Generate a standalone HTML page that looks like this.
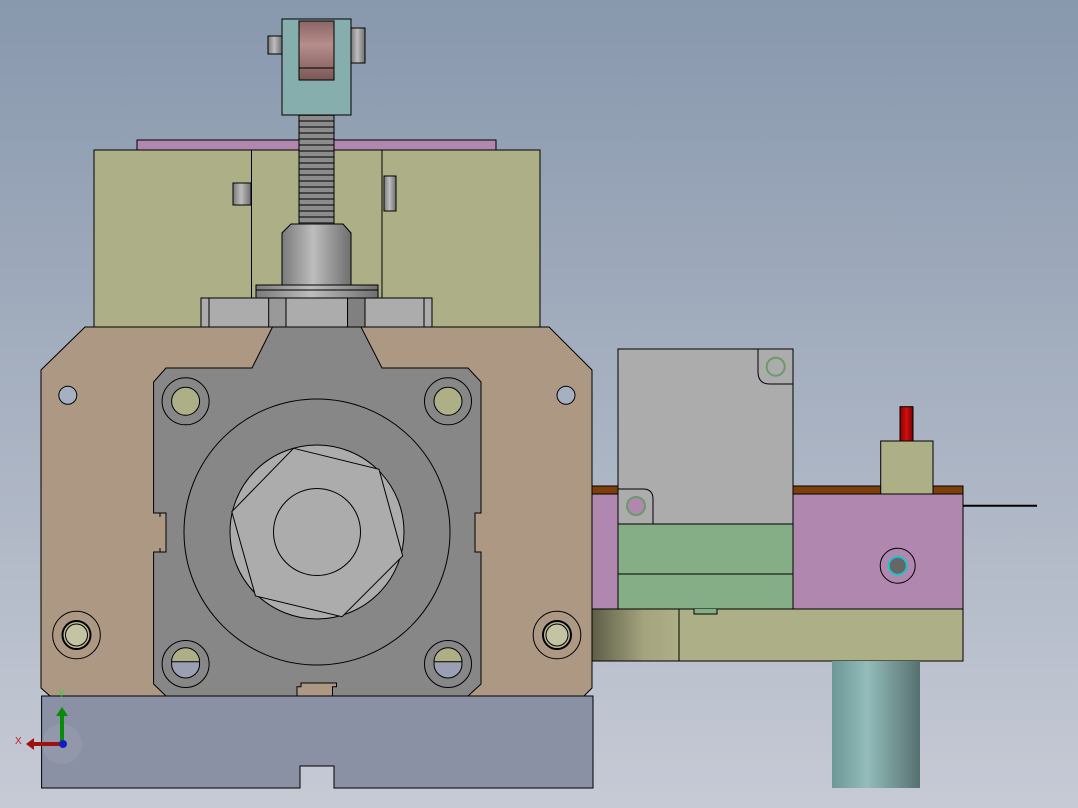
<!DOCTYPE html>
<html><head><meta charset="utf-8"><style>
html,body{margin:0;padding:0;width:1078px;height:808px;overflow:hidden}
svg{display:block}
</style></head><body>
<svg width="1078" height="808" viewBox="0 0 1078 808" xmlns="http://www.w3.org/2000/svg" font-family="Liberation Sans, sans-serif">
<defs>
<linearGradient id="bg" x1="0" y1="0" x2="0" y2="1"><stop offset="0" stop-color="#8898ad"/><stop offset="1" stop-color="#c6cad5"/></linearGradient>
<linearGradient id="cyl" x1="0" y1="0" x2="1" y2="0"><stop offset="0" stop-color="#6d9796"/><stop offset="0.4" stop-color="#93bcbb"/><stop offset="1" stop-color="#56716f"/></linearGradient>
<linearGradient id="metal" x1="0" y1="0" x2="1" y2="0"><stop offset="0" stop-color="#7a7a7a"/><stop offset="0.45" stop-color="#bdbdbd"/><stop offset="1" stop-color="#6f6f6f"/></linearGradient>
<linearGradient id="roll" x1="0" y1="0" x2="0" y2="1"><stop offset="0" stop-color="#8a6664"/><stop offset="0.4" stop-color="#b68e8c"/><stop offset="1" stop-color="#7a5856"/></linearGradient>
<linearGradient id="ol" x1="0" y1="0" x2="1" y2="0"><stop offset="0" stop-color="#5e5e48"/><stop offset="0.6" stop-color="#a4a47e"/><stop offset="1" stop-color="#adaf87"/></linearGradient>
<linearGradient id="red" x1="0" y1="0" x2="1" y2="0"><stop offset="0" stop-color="#8a0000"/><stop offset="0.5" stop-color="#d01010"/><stop offset="1" stop-color="#7a0000"/></linearGradient>
<pattern id="thr" width="10" height="6" patternUnits="userSpaceOnUse"><rect width="10" height="6" fill="#8c8c8c"/><rect y="0" width="10" height="2" fill="#444"/></pattern>
</defs>
<rect width="1078" height="808" fill="url(#bg)"/>
<g stroke="#000" stroke-width="1">
<!-- top clevis -->
<rect x="268" y="36" width="14" height="18" fill="url(#metal)"/>
<rect x="351" y="28" width="14" height="35" fill="url(#metal)"/>
<rect x="282" y="19" width="69" height="96" fill="#86aeac"/>
<rect x="299" y="21" width="35" height="59" fill="url(#roll)"/>
<line x1="299" y1="68" x2="334" y2="68"/>
<!-- pink plate -->
<rect x="137" y="140" width="359" height="10" fill="#b087ae"/>
<!-- olive block -->
<rect x="94" y="150" width="446" height="177" fill="#adaf87"/>
<line x1="251.5" y1="150" x2="251.5" y2="327"/>
<line x1="382" y1="150" x2="382" y2="327"/>
<rect x="233" y="183" width="18" height="22" fill="url(#metal)"/>
<rect x="384" y="176" width="12" height="35" fill="url(#metal)"/>
<!-- thread -->
<rect x="299" y="115" width="35" height="109" fill="url(#thr)"/>
<!-- nut -->
<path d="M291 224 H343 L351 233 V285 H282 V233 Z" fill="url(#metal)"/>
<rect x="256" y="285" width="122" height="13" fill="url(#metal)"/>
<line x1="256" y1="290" x2="378" y2="290"/>
<rect x="201" y="298" width="231" height="29" fill="#acacac"/>
<rect x="268.7" y="298" width="17.3" height="29" fill="#999"/>
<rect x="347.5" y="298" width="17.5" height="29" fill="#808080"/>
<line x1="209" y1="298" x2="209" y2="327"/><line x1="424" y1="298" x2="424" y2="327"/>
<!-- brown plate -->
<path d="M85 327 H549 L592 370 V688 L584 696 H50 L41 688 V370 Z" fill="#ad9884"/>
<!-- gray plate -->
<path d="M272.5 327 H361 L382 368 H468 L481 382 V513 H475 V552 H481 V684 L468 696 H166 L153.6 684 V552 H166 V513 H153.6 V382 L166 368 H252 Z" fill="#878787"/>
<path d="M153.6 513 H160 V517 M153.6 552 H160 V548" fill="none"/>
<circle cx="317" cy="532" r="133" fill="#878787"/>
<circle cx="317" cy="532" r="87" fill="#acacac"/>
<polygon points="293.6,448.3 379,469.3 402.7,556 342,616.7 255.5,596 231.8,511.7" fill="#acacac"/>
<circle cx="317" cy="532" r="43.5" fill="#acacac"/>
<!-- bolt holes -->
<circle cx="185.6" cy="401.3" r="23.5" fill="none"/><circle cx="185.6" cy="401.3" r="14" fill="#adaf87"/>
<circle cx="448" cy="401.3" r="23.5" fill="none"/><circle cx="448" cy="401.3" r="14" fill="#adaf87"/>
<circle cx="185.6" cy="664" r="23.5" fill="none"/><circle cx="185.6" cy="664" r="14" fill="#9a9fb3"/>
<path d="M171.6 661.7 A14 14 0 0 1 199.6 661.7 Z" fill="#adaf87"/>
<circle cx="448" cy="664" r="23.5" fill="none"/><circle cx="448" cy="664" r="14" fill="#9a9fb3"/>
<path d="M434 661.7 A14 14 0 0 1 462 661.7 Z" fill="#adaf87"/>
<circle cx="67.8" cy="395.3" r="9" fill="#a5b0c2"/>
<circle cx="566" cy="395.3" r="9" fill="#a5b0c2"/>
<circle cx="76.5" cy="635" r="23.8" fill="none"/><circle cx="76.5" cy="635" r="14" fill="#b8b894" stroke-width="2"/><circle cx="76.5" cy="635" r="11" fill="#c4c4a4"/>
<circle cx="557" cy="635" r="23.8" fill="none"/><circle cx="557" cy="635" r="14" fill="#b8b894" stroke-width="2"/><circle cx="557" cy="635" r="11" fill="#c4c4a4"/>
<path d="M297 696 V686.7 H301 V683 H336.5 V686.7 H332.5 V696" fill="#ad9884"/>
<!-- bottom block -->
<path d="M41.6 696 H593 V788 H334 V766 H300 V788 H41.6 Z" fill="#8a91a5"/>
<!-- right assembly -->
<rect x="592" y="486" width="371" height="8" fill="#7f3f0b"/>
<rect x="592" y="494" width="26" height="115" fill="#b087ae"/>
<rect x="793" y="494" width="170" height="115" fill="#b087ae"/>
<rect x="880.7" y="441" width="52.3" height="53" fill="#adaf87"/>
<rect x="900" y="406.7" width="13" height="34.3" fill="url(#red)"/>
<rect x="618" y="349" width="175" height="175" fill="#acacac"/>
<path d="M758 349 V372 Q758 384 770 384 H793" fill="none"/>
<path d="M618 489 H643 Q653 489 653 499 V524" fill="none"/>
<circle cx="775.7" cy="366.7" r="9" fill="none" stroke="#6a9a6a" stroke-width="2"/>
<circle cx="636" cy="506" r="9" fill="#b087ae" stroke="#6a9a6a" stroke-width="2"/>
<rect x="618" y="524" width="175" height="85" fill="#86ae86"/>
<line x1="618" y1="574" x2="793" y2="574"/>
<rect x="592" y="609" width="87" height="52" fill="url(#ol)"/>
<rect x="679" y="609" width="284" height="52" fill="#adaf87"/>
<path d="M694 609 V614 H717 V609" fill="#86ae86"/>
<circle cx="897.7" cy="565.7" r="17.5" fill="none"/>
<circle cx="897.7" cy="565.7" r="9" fill="#666" stroke="#19c5c8" stroke-width="2"/>
<line x1="963" y1="505.7" x2="1037" y2="505.7" stroke-width="2"/>
<rect x="832" y="661" width="88" height="127" fill="url(#cyl)" stroke="none"/>
</g>
<!-- triad -->
<circle cx="62" cy="744" r="20" fill="#9aa0b0" opacity="0.5"/>
<line x1="62" y1="744" x2="62" y2="714" stroke="#0a8a0a" stroke-width="4"/>
<polygon points="56,716 68,716 62,707" fill="#0a8a0a"/>
<line x1="62" y1="744" x2="32" y2="744" stroke="#a01010" stroke-width="4"/>
<polygon points="34,738 34,750 26,744" fill="#a01010"/>
<circle cx="63" cy="744" r="4" fill="#1020c0"/>
<text x="58" y="697" font-size="10" fill="#20e020">Y</text>
<text x="15" y="744" font-size="10" fill="#c02020">X</text>
</svg>
</body></html>
